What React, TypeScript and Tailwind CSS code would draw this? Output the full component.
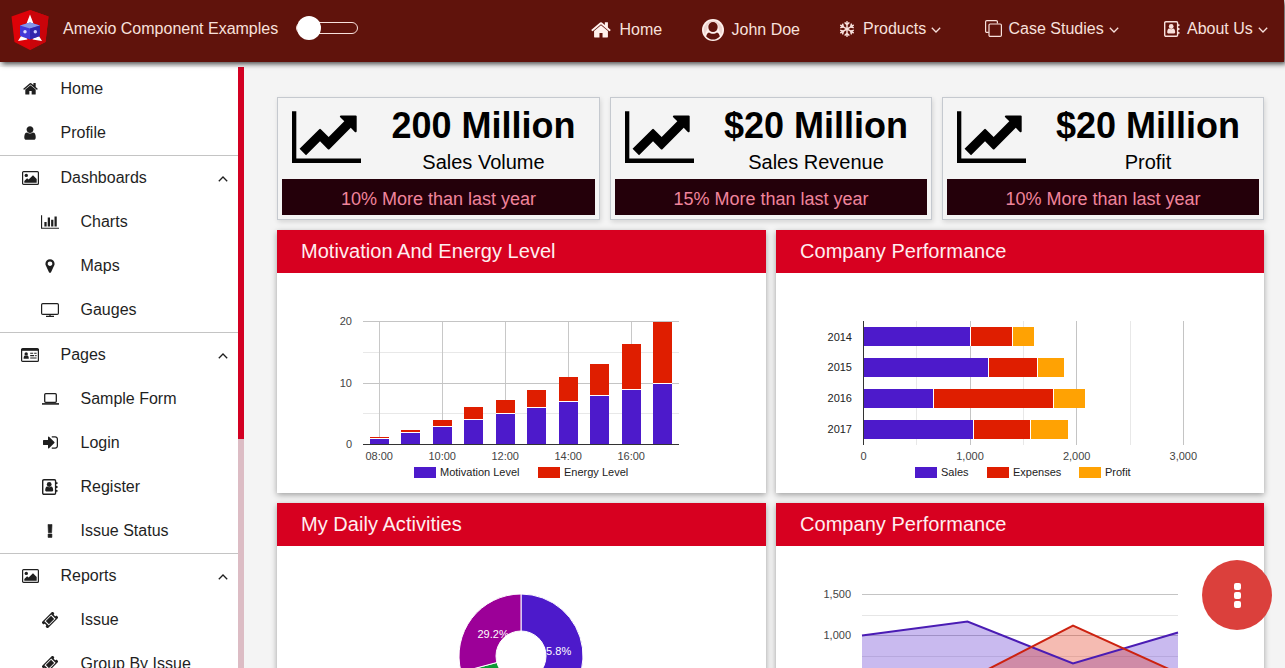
import React from "react";
import { FaRegSnowflake } from "react-icons/fa";

type IconProps = { className?: string };

const glyph = (viewBox: string, d: string) => ({ className = "" }: IconProps) => (
  <svg viewBox={viewBox} className={className} fill="currentColor" fillRule="nonzero">
    <path d={d} />
  </svg>
);

const HomeIcon = glyph(
  "64 160 1664 1408",
  "M1472 992v480q0 26-19 45t-45 19h-384v-384h-256v384h-384q-26 0-45-19t-19-45v-480q0-1 .5-3t.5-3l575-474 575 474q1 2 1 6zm223-69l-62 74q-8 9-21 11h-3q-13 0-21-7l-692-577-692 577q-12 8-24 7-13-2-21-11l-62-74q-8-10-7-23.5t11-21.5l719-599q32-26 76-26t76 26l244 204v-195q0-14 9-23t23-9h192q14 0 23 9t9 23v408l219 182q10 8 11 21.5t-7 23.5z"
);
const UserIcon = glyph(
  "0 0 1792 1792",
  "M1536 1399q0 109-62.5 187t-150.5 78h-854q-88 0-150.5-78t-62.5-187q0-85 8.5-160.5t31.5-152 58.5-131 94-89 134.5-34.5q131 128 313 128t313-128q76 0 134.5 34.5t94 89 58.5 131 31.5 152 8.5 160.5zm-256-887q0 159-112.5 271.5t-271.5 112.5-271.5-112.5-112.5-271.5 112.5-271.5 271.5-112.5 271.5 112.5 112.5 271.5z"
);
const BarIcon = glyph(
  "0 128 2048 1536",
  "M640 896v512h-256v-512h256zm384-512v1024h-256v-1024h256zm1024 1152v128h-2048v-1536h128v1408h1920zm-640-896v768h-256v-768h256zm384-384v1152h-256v-1152h256z"
);
const MarkerIcon = glyph(
  "0 0 1792 1792",
  "M1152 640q0-106-75-181t-181-75-181 75-75 181 75 181 181 75 181-75 75-181zm256 0q0 109-33 179l-364 774q-16 33-47.5 52t-67.5 19-67.5-19-46.5-52l-365-774q-33-70-33-179 0-212 150-362t362-150 362 150 150 362z"
);
const LineChartIcon = glyph(
  "0 128 2048 1536",
  "M2048 1536v128h-2048v-1536h128v1408h1920zm-128-1248v435q0 21-19.5 29.5t-35.5-7.5l-121-121-633 633q-10 10-23 10t-23-10l-233-233-416 416-192-192 585-585q10-10 23-10t23 10l233 233 464-464-121-121q-16-16-7.5-35.5t29.5-19.5h435q14 0 23 9t9 23z"
);
const SignInIcon = glyph(
  "128 256 1536 1280",
  "M1312 896q0 26-19 45l-544 544q-19 19-45 19t-45-19-19-45v-288h-448q-26 0-45-19t-19-45v-384q0-26 19-45t45-19h448v-288q0-26 19-45t45-19 45 19l544 544q19 19 19 45zm352-352v704q0 119-84.5 203.5t-203.5 84.5h-320q-13 0-22.5-9.5t-9.5-22.5q0-4-1-20t-.5-26.5 3-23.5 10-19.5 20.5-6.5h320q66 0 113-47t47-113v-704q0-66-47-113t-113-47h-312l-11.5-1-11.5-3-8-5.5-7-9-2-13.5q0-4-1-20t-.5-26.5 3-23.5 10-19.5 20.5-6.5h320q119 0 203.5 84.5t84.5 203.5z"
);

const ImageIcon = ({ className = "" }: IconProps) => (
  <svg viewBox="0 0 17 14" className={className} fill="currentColor">
    <rect x=".6" y=".6" width="15.8" height="12.8" rx="1" fill="none" stroke="currentColor" strokeWidth="1.2" />
    <circle cx="4.3" cy="4.4" r="1.7" />
    <path d="M2.3 11.7V10l2.8-2.800 1.500 1.400L11 4.200l3.700 3.700v3.800z" />
  </svg>
);
const TvIcon = ({ className = "" }: IconProps) => (
  <svg viewBox="0 0 18 14" className={className} fill="none" stroke="currentColor">
    <rect x=".6" y=".6" width="16.800" height="10.800" rx="1.200" strokeWidth="1.200" />
    <path d="M9 11.500v1.500M5 13.300h8" strokeWidth="1.300" />
  </svg>
);
const CardIcon = ({ className = "" }: IconProps) => (
  <svg viewBox="0 0 18 14" className={className} fill="currentColor">
    <rect x=".6" y=".6" width="16.8" height="12.8" rx="1" fill="none" stroke="currentColor" strokeWidth="1.2" />
    <path d="M0 1h18v1.8H0z" />
    <circle cx="5.2" cy="6" r="1.7" />
    <path d="M2.6 10.8c0-2 .5-3.2 1.4-3.3.7.6 1.7.6 2.4 0 .9.1 1.4 1.3 1.4 3.3zM9.2 4.7h3v1.1h-3zm4 0h2.4v1.1h-2.4zM9.2 7.1h4v1.1h-4zm5 0h1.4v1.1h-1.4zM9.2 9.5h6.4v1.1H9.2z" />
  </svg>
);
const LaptopIcon = ({ className = "" }: IconProps) => (
  <svg viewBox="0 0 17 12" className={className} fill="none" stroke="currentColor">
    <rect x="2.7" y=".7" width="11.6" height="8.6" rx="1" strokeWidth="1.3" />
    <path d="M0 10.9h17" strokeWidth="1.6" />
  </svg>
);
const BookIcon = ({ className = "" }: IconProps) => (
  <svg viewBox="0 0 16 16" className={className} fill="currentColor">
    <rect x=".7" y=".7" width="12.900" height="14.600" rx="1.200" fill="none" stroke="currentColor" strokeWidth="1.400" />
    <path d="M13.500 3.200h2v1.800h-2zm0 3.900h2v1.800h-2zm0 3.900h2v1.800h-2z" />
    <circle cx="7.200" cy="5.500" r="2.400" />
    <path d="M3.200 11.600c0-2.500.7-4 2-4.100 1.100.9 2.900.9 4 0 1.300.1 2 1.600 2 4.100 0 .4-.4.8-.9.8H4.100c-.5 0-.9-.4-.9-.8z" />
  </svg>
);
const ExclamationIcon = ({ className = "" }: IconProps) => (
  <svg viewBox="0 0 6 14" className={className} fill="currentColor">
    <path d="M1 .4h4L4.600 8.700H1.400zM1.100 10h3.800v3.400H1.100z" stroke="currentColor" strokeWidth=".6" strokeLinejoin="round" />
  </svg>
);
const TicketIcon = ({ className = "" }: IconProps) => (
  <svg viewBox="0 0 16 16" className={className} fill="currentColor">
    <g transform="rotate(-45 8 8)">
      <path
        fillRule="evenodd"
        d="M0.2 3.7h15.6v2.7a1.6 1.6 0 0 0 0 3.2v2.7H.2V9.6a1.6 1.6 0 0 0 0-3.2zM3.2 4.9v6.2h9.6V4.9z"
      />
      <path d="M4.3 5.8h7.4v4.4H4.3z" />
    </g>
  </svg>
);
const UserCircleIcon = ({ className = "" }: IconProps) => (
  <svg viewBox="0 0 22 22" className={className} fill="currentColor">
    <circle cx="11" cy="11" r="11" />
    <path d="M11 1.600a9.400 9.400 0 0 0-9.300 9.400c0 1.800.5 3.500 1.400 4.900C3.800 12 5.500 11.600 5.500 8.200 5.500 5 7.900 2.800 11 2.800s5.500 2.200 5.500 5.400c0 3.400 1.700 3.800 2.400 7.700.9-1.400 1.400-3.100 1.400-4.900A9.400 9.400 0 0 0 11 1.600z" className="fill-[#60130c]" fillOpacity=".12" />
    <ellipse cx="11" cy="8.100" rx="4.700" ry="5" className="fill-[#60130c]" />
    <path d="M4.200 17.400c.4-2.400 1.300-3.700 2.800-4 2.300 1.900 5.700 1.900 8 0 1.500.3 2.400 1.600 2.800 4-3.700 4.100-9.900 4.100-13.600 0z" className="fill-[#60130c]" />
  </svg>
);
const CloneIcon = ({ className = "" }: IconProps) => (
  <svg viewBox="0 0 17 17" className={className} fill="none" stroke="currentColor" strokeWidth="1.2">
    <path d="M3.800 12.400H1.800a1.200 1.200 0 0 1-1.200-1.200V1.800A1.200 1.200 0 0 1 1.800.6h9.400a1.200 1.200 0 0 1 1.200 1.200v1.800" />
    <rect x="4" y="4" width="12.400" height="12.400" rx="1.200" />
  </svg>
);
const Chevron = ({ className = "" }: IconProps) => (
  <svg viewBox="0 0 10 6" className={className} fill="none" stroke="currentColor" strokeWidth="1.3">
    <path d="M.8.8 5 5 9.200.8" />
  </svg>
);
const Logo = () => (
  <svg viewBox="0 0 38 40" className="-mt-[2px] h-10 w-[38px] shrink-0">
    <path d="M19 0 37.500 6.500 34.500 32 19 40 3.500 32 .5 6.500z" fill="#dd0208" />
    <path d="M19 0 37.500 6.500 34.500 32 19 40z" fill="#ca040a" />
    <path d="M19 4.500 23 15h-8zM7 31l5.500-9 4 7.500zM31 31l-5.500-9-4 7.500z" fill="#fff" />
    <path d="M9 15.500l10-3 10 3v10.500L19 29.500 9 26z" fill="#4338d8" />
    <path d="M9 15.500l10-3 10 3-10 3z" fill="#8497ea" />
    <path d="M19 18.500l10-3v10.500l-10 3.500z" fill="#3025ac" />
    <circle cx="14" cy="21.800" r="1.700" fill="#dcdcff" />
    <circle cx="24.300" cy="21.800" r="1.700" fill="#cfd0ff" />
  </svg>
);

type Item = { label: string; Icon: React.FC<IconProps>; size: string };
type Group = { items: Item[]; head?: Item };

const groups: Group[] = [
  {
    items: [
      { label: "Home", Icon: HomeIcon, size: "w-[15px] h-[13px]" },
      { label: "Profile", Icon: UserIcon, size: "w-4 h-4" },
    ],
  },
  {
    head: { label: "Dashboards", Icon: ImageIcon, size: "w-[17px] h-[14px]" },
    items: [
      { label: "Charts", Icon: BarIcon, size: "w-[18px] h-[14px]" },
      { label: "Maps", Icon: MarkerIcon, size: "w-4 h-4" },
      { label: "Gauges", Icon: TvIcon, size: "w-[18px] h-[14px]" },
    ],
  },
  {
    head: { label: "Pages", Icon: CardIcon, size: "w-[18px] h-[14px]" },
    items: [
      { label: "Sample Form", Icon: LaptopIcon, size: "w-[17px] h-3" },
      { label: "Login", Icon: SignInIcon, size: "w-[15px] h-[13px]" },
      { label: "Register", Icon: BookIcon, size: "w-4 h-4" },
      { label: "Issue Status", Icon: ExclamationIcon, size: "w-[6px] h-[14px]" },
    ],
  },
  {
    head: { label: "Reports", Icon: ImageIcon, size: "w-[17px] h-[14px]" },
    items: [
      { label: "Issue", Icon: TicketIcon, size: "w-4 h-4" },
      { label: "Group By Issue", Icon: TicketIcon, size: "w-4 h-4" },
    ],
  },
];

function Row({ item, nested, head }: { item: Item; nested?: boolean; head?: boolean }) {
  const { Icon } = item;
  return (
    <div className={`flex h-11 shrink-0 items-center pr-[10px] ${nested ? "pl-10" : "pl-5"}`}>
      <span className="-mt-px flex w-5 shrink-0 justify-center">
        <Icon className={item.size} />
      </span>
      <span className="ml-[20.5px] flex-1 whitespace-nowrap">{item.label}</span>
      {head && <Chevron className="mt-px h-[6px] w-[10px] rotate-180" />}
    </div>
  );
}

function Sidebar() {
  return (
    <aside className="flex w-[244px] shrink-0 overflow-hidden bg-white">
      <nav className="flex w-[238px] flex-col text-base text-[#1f1f1f]">
        {groups.map((g, i) => (
          <div key={i} className={i ? "border-t border-[#c4c4c4]" : ""}>
            {g.head && <Row item={g.head} head />}
            {g.items.map((it) => (
              <Row key={it.label} item={it} nested={!!g.head} />
            ))}
          </div>
        ))}
      </nav>
      <div className="w-[6px] bg-[#dcbcc4]">
        <div className="h-[372px] bg-[#d30022]" />
      </div>
    </aside>
  );
}

function Header() {
  return (
    <header className="relative z-10 flex h-[62px] w-[1284px] shrink-0 items-center bg-[#60130c] pl-[11px] pr-4 text-base text-[#f8e0dc] shadow-[2px_2px_5px_rgba(0,0,0,0.7)]">
      <Logo />
      <span className="-mt-[5px] ml-[14px] w-[233px] whitespace-nowrap">Amexio Component Examples</span>
      <span className="-mt-[6px] flex h-6 w-[62px] items-center">
        <span className="flex h-3 w-[62px] items-center rounded-full border border-[#f8e0dc]">
          <span className="h-6 w-6 shrink-0 rounded-full bg-white" />
        </span>
      </span>
      <div className="-mt-[5px] ml-[233px] flex flex-1 items-center whitespace-nowrap">
        <div className="mt-[2px] flex w-[111px] items-center">
          <HomeIcon className="mr-[8.5px] h-[17px] w-5 text-[#fff0ec]" />
          Home
        </div>
        <div className="mt-[2px] flex w-[138px] items-center">
          <UserCircleIcon className="mr-[7.5px] h-[22px] w-[22px] text-[#fff0ec]" />
          John Doe
        </div>
        <div className="flex w-[145px] items-center">
          <FaRegSnowflake className="-ml-px mr-2 h-4 w-4" />
          Products
          <Chevron className="ml-[5px] mt-[2px] h-[6px] w-[10px]" />
        </div>
        <div className="flex w-[179px] items-center">
          <CloneIcon className="mr-[6.5px] h-[17px] w-[17px]" />
          Case Studies
          <Chevron className="ml-[5px] mt-[2px] h-[6px] w-[10px]" />
        </div>
        <div className="flex items-center">
          <BookIcon className="mr-[7px] h-4 w-4" />
          About Us
          <Chevron className="ml-[5px] mt-[2px] h-[6px] w-[10px]" />
        </div>
      </div>
    </header>
  );
}

const stats = [
  { value: "200 Million", label: "Sales Volume", note: "10% More than last year" },
  { value: "$20 Million", label: "Sales Revenue", note: "15% More than last year" },
  { value: "$20 Million", label: "Profit", note: "10% More than last year" },
];

function Stat({ value, label, note }: { value: string; label: string; note: string }) {
  return (
    <div className="flex h-[123px] flex-col border border-[#c5c9cf] px-1 pb-1 text-black shadow-[1px_2px_5px_rgba(0,0,0,0.13)]">
      <div className="flex h-[81px]">
        <LineChartIcon className="ml-[10px] mt-[13px] h-[52px] w-[69px] shrink-0" />
        <div className="ml-[11px] flex flex-1 flex-col items-center">
          <div className="mt-2 h-10 whitespace-nowrap text-[36px] font-bold leading-10">{value}</div>
          <div className="mt-[2px] text-xl leading-7">{label}</div>
        </div>
      </div>
      <div className="h-9 bg-[#24000a] pt-px text-center text-lg leading-[38px] text-[#f0849c]">{note}</div>
    </div>
  );
}

function Panel({ title, viewBox, children }: { title: string; viewBox: string; children: React.ReactNode }) {
  return (
    <section className="h-[263px] bg-white shadow-[0_2px_6px_rgba(0,0,0,0.35)]">
      <h2 className="h-[43px] bg-[#d70020] pl-6 text-xl leading-[42px] tracking-[0.04px] text-[#ffeef0]">{title}</h2>
      <svg viewBox={viewBox} className="block h-[220px] w-full text-[11px]" preserveAspectRatio="xMinYMin">
        {children}
      </svg>
    </section>
  );
}

const BLUE = "#4d1acb";
const RED = "#df1e00";
const ORANGE = "#ffa203";

const bars = [
  [370, 437, 439], [401, 430, 433], [433, 420, 427], [464, 407, 420], [496, 400, 414],
  [527, 390, 408], [559, 377, 402], [590, 364, 396], [622, 344, 390], [653, 322, 384],
];

function Legend({ items }: { items: [number, string, string][] }) {
  return (
    <>
      {items.map(([x, c, t]) => (
        <g key={t}>
          <rect x={x} y="467" width="22" height="11" fill={c} />
          <text x={x + 26} y="476" fill="#222">{t}</text>
        </g>
      ))}
    </>
  );
}

function EnergyChart() {
  return (
    <>
      {[352, 413].map((y) => <rect key={y} x="363" y={y} width="316" height="1" fill="#e8e8e8" />)}
      {[379, 442, 505, 568, 631].map((x, i) => (
        <g key={x}>
          <rect x={x} y="321" width="1" height="123" fill="#c8c8c8" />
          <text x={x + 0.2} y="460" textAnchor="middle" fill="#444">{["08:00", "10:00", "12:00", "14:00", "16:00"][i]}</text>
        </g>
      ))}
      {[321, 383].map((y) => <rect key={y} x="363" y={y} width="316" height="1" fill="#c4c4c4" />)}
      {bars.map(([x, t, b]) => (
        <g key={x}>
          <rect x={x} y={t} width="19" height={444 - t} fill="#fff" />
          <rect x={x} y={t} width="19" height={b - 1 - t} fill={RED} />
          <rect x={x} y={b} width="19" height={444 - b} fill={BLUE} />
        </g>
      ))}
      <rect x="363" y="444" width="316" height="1" fill="#333" />
      <g fill="#444" textAnchor="end">
        <text x="352" y="325">20</text>
        <text x="352" y="387">10</text>
        <text x="352" y="448">0</text>
      </g>
      <Legend items={[[414, BLUE, "Motivation Level"], [538, RED, "Energy Level"]]} />
    </>
  );
}

const years: [string, number, number, number, number][] = [
  ["2014", 327, 970, 1012, 1034],
  ["2015", 358, 988, 1037, 1064],
  ["2016", 389, 933, 1053, 1085],
  ["2017", 420, 973, 1030, 1068],
];

function PerformanceChart() {
  return (
    <>
      {[916, 1023, 1130].map((x) => <rect key={x} x={x} y="321" width="1" height="124" fill="#e8e8e8" />)}
      {[970, 1076, 1183].map((x) => <rect key={x} x={x} y="321" width="1" height="124" fill="#c4c4c4" />)}
      {years.map(([label, y, a, b, c], i) => (
        <g key={label}>
          <rect x="864" y={y} width={c - 864} height="19" fill="#fff" />
          <rect x="864" y={y} width={a - 864} height="19" fill={BLUE} />
          <rect x={a + 1} y={y} width={b - a - 1} height="19" fill={RED} />
          <rect x={b + 1} y={y} width={c - b - 1} height="19" fill={ORANGE} />
          <text x="852" y={[341, 371, 402, 433][i]} textAnchor="end" fill="#222">{label}</text>
        </g>
      ))}
      <rect x="863" y="321" width="1" height="124" fill="#333" />
      <g fill="#444" textAnchor="middle">
        <text x="863.500" y="460">0</text>
        <text x="970" y="460">1,000</text>
        <text x="1076.700" y="460">2,000</text>
        <text x="1183.300" y="460">3,000</text>
      </g>
      <Legend items={[[915, BLUE, "Sales"], [987, RED, "Expenses"], [1079, ORANGE, "Profit"]]} />
    </>
  );
}

function slice(from: number, to: number) {
  const p = (deg: number) => {
    const a = (deg * Math.PI) / 180;
    return `${521 + 62 * Math.sin(a)} ${656 - 62 * Math.cos(a)}`;
  };
  return `M521 656L${p(from)}A62 62 0 0 1 ${p(to)}Z`;
}

function ActivitiesChart() {
  return (
    <>
      <g stroke="#fff" strokeWidth="1">
        <path d={slice(0, 165)} fill={BLUE} />
        <path d={slice(165, 195)} fill={RED} />
        <path d={slice(195, 225)} fill={ORANGE} />
        <path d={slice(225, 255)} fill="#109a35" />
        <path d={slice(255, 360)} fill="#9c0098" />
        <circle cx="521" cy="656" r="25" fill="#fff" />
      </g>
      <text x="477.500" y="638" fill="#fff">29.2%</text>
      <text x="540" y="655" fill="#fff">45.8%</text>
    </>
  );
}

function AreaChart() {
  const blue = "862,635.500 967.500,621.500 1073,663.500 1178,632.500";
  const red = "862,684.700 967.500,679.800 1073,625.500 1178,673.200";
  return (
    <>
      {[615, 656].map((y) => <rect key={y} x="862" y={y} width="316" height="1" fill="#e6e6e6" />)}
      {[594, 635].map((y) => <rect key={y} x="862" y={y} width="316" height="1" fill="#c4c4c4" />)}
      <polygon points={`${blue} 1178,718 862,718`} fill={BLUE} fillOpacity=".3" />
      <polygon points={`${red} 1178,718 862,718`} fill={RED} fillOpacity=".3" />
      <polyline points={blue} fill="none" stroke="#4a1cb4" strokeWidth="2" />
      <polyline points={red} fill="none" stroke="#cc2210" strokeWidth="2" />
      <g fill="#444" textAnchor="end">
        <text x="851" y="598">1,500</text>
        <text x="851" y="639">1,000</text>
      </g>
    </>
  );
}

export default function App() {
  return (
    <div className="relative flex h-[668px] w-[1285px] flex-col overflow-hidden bg-[#f4f4f4] font-['Liberation_Sans',Arial,sans-serif]">
      <Header />
      <div className="flex min-h-0 flex-1 pt-[5px]">
        <Sidebar />
        <main className="ml-[33px] mt-[30px] w-[987px] shrink-0">
          <div className="grid grid-cols-[323px_322px_322px] gap-[10px]">
            {stats.map((s) => <Stat key={s.label} {...s} />)}
          </div>
          <div className="mt-[10px] grid grid-cols-[489px_488px] gap-[10px]">
            <Panel title="Motivation And Energy Level" viewBox="277 273 489 220"><EnergyChart /></Panel>
            <Panel title="Company Performance" viewBox="776 273 488 220"><PerformanceChart /></Panel>
            <Panel title="My Daily Activities" viewBox="277 546 489 220"><ActivitiesChart /></Panel>
            <Panel title="Company Performance" viewBox="776 546 488 220"><AreaChart /></Panel>
          </div>
        </main>
      </div>
      <button className="absolute left-[1202px] top-[560px] flex h-[70px] w-[70px] flex-col items-center justify-center gap-[2px] rounded-full bg-[#db403c]">
        <span className="h-[7px] w-[7px] rounded-[2px] bg-white" />
        <span className="h-[7px] w-[7px] rounded-[2px] bg-white" />
        <span className="h-[7px] w-[7px] rounded-[2px] bg-white" />
      </button>
    </div>
  );
}
